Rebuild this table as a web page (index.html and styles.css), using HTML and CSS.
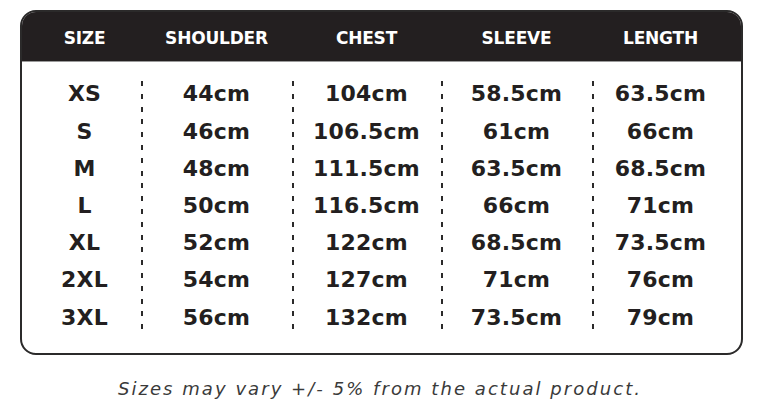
FILE: index.html
```html
<!DOCTYPE html>
<html>
<head>
<meta charset="utf-8">
<link rel="stylesheet" href="styles.css">
</head>
<body>
<div class="chart">
  <div class="head">
    <div class="hcell c1">SIZE</div>
    <div class="hcell">SHOULDER</div>
    <div class="hcell">CHEST</div>
    <div class="hcell">SLEEVE</div>
    <div class="hcell c5">LENGTH</div>
  </div>
  <div class="body">
    <div class="col c1">
      <div class="cell">XS</div><div class="cell">S</div><div class="cell">M</div><div class="cell">L</div><div class="cell">XL</div><div class="cell">2XL</div><div class="cell">3XL</div>
    </div>
    <div class="col dv">
      <div class="cell">44cm</div><div class="cell">46cm</div><div class="cell">48cm</div><div class="cell">50cm</div><div class="cell">52cm</div><div class="cell">54cm</div><div class="cell">56cm</div>
    </div>
    <div class="col dv">
      <div class="cell">104cm</div><div class="cell">106.5cm</div><div class="cell">111.5cm</div><div class="cell">116.5cm</div><div class="cell">122cm</div><div class="cell">127cm</div><div class="cell">132cm</div>
    </div>
    <div class="col dv">
      <div class="cell">58.5cm</div><div class="cell">61cm</div><div class="cell">63.5cm</div><div class="cell">66cm</div><div class="cell">68.5cm</div><div class="cell">71cm</div><div class="cell">73.5cm</div>
    </div>
    <div class="col dv c5">
      <div class="cell">63.5cm</div><div class="cell">66cm</div><div class="cell">68.5cm</div><div class="cell">71cm</div><div class="cell">73.5cm</div><div class="cell">76cm</div><div class="cell">79cm</div>
    </div>
  </div>
</div>
<p class="note">Sizes may vary +/- 5% from the actual product.</p>
</body>
</html>
```
FILE: styles.css
```css
html, body {
  margin: 0;
  padding: 0;
  background: #ffffff;
}
body {
  font-family: "DejaVu Sans", "Liberation Sans", sans-serif;
  color: #231f20;
}
.chart {
  margin: 10px 0 0 20px;
  width: 719px;
  border: 2px solid #2b2a2a;
  border-radius: 16px;
  overflow: hidden;
  background: #fff;
}
.head {
  display: grid;
  grid-template-columns: 119px 151px 149px 151px 149px;
  height: 49px;
  align-items: center;
  background: #231f20;
  border-bottom: 1px solid #9a9a9a;
  color: #ffffff;
  font-weight: bold;
  font-size: 17px;
  letter-spacing: -0.2px;
}
.hcell {
  text-align: center;
  padding-top: 3px;
}
.c1 {
  padding-left: 6px;
}
.c5 {
  padding-right: 12px;
}
.body {
  display: grid;
  grid-template-columns: 119px 151px 149px 151px 149px;
  padding: 13.4px 0 17px;
}
.col {
  display: flex;
  flex-direction: column;
  align-items: center;
}
.dv {
  background-image: repeating-linear-gradient(to bottom, #2b2a2a 0 5px, transparent 5px 12.8px);
  background-repeat: no-repeat;
  background-position: 0 6px;
  background-size: 2px calc(100% - 13px);
}
.cell {
  height: 37.2px;
  line-height: 37.2px;
  font-size: 22px;
  font-weight: bold;
  letter-spacing: 0.2px;
  white-space: nowrap;
}
.note {
  margin: 23px 0 0 0;
  text-align: center;
  font-family: "DejaVu Sans", sans-serif;
  font-style: italic;
  font-size: 18px;
  line-height: 22px;
  letter-spacing: 2.05px;
  color: #3a3a3a;
  padding-right: 4px;
}
```
